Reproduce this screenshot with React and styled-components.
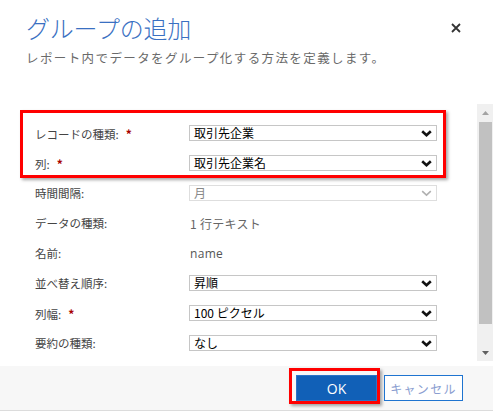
import React from "react";
import styled, { createGlobalStyle } from "styled-components";

const GlobalStyle = createGlobalStyle`
  html, body { margin: 0; padding: 0; background: #fff; }
  body {
    font-family: "Noto Sans CJK JP", "Noto Sans", sans-serif;
    overflow: hidden;
  }
  * { box-sizing: border-box; }
`;

const Dialog = styled.div`
  width: 493px;
  height: 411px;
  display: flex;
  flex-direction: column;
  background: #fff;
`;

const Header = styled.header`
  display: flex;
  justify-content: space-between;
  align-items: flex-start;
  padding: 12px 32px 0 26px;
`;

const Title = styled.h1`
  margin: 0;
  font-size: 24px;
  line-height: 32px;
  font-weight: 200;
  color: #3a70c2;
  letter-spacing: -0.2px;
`;

const Subtitle = styled.p`
  margin: 5px 0 0;
  font-size: 12.5px;
  line-height: 18px;
  color: #6a6a6a;
  letter-spacing: 1.4px;
`;

const CloseButton = styled.button`
  margin-top: 11px;
  padding: 0;
  border: 0;
  background: none;
  width: 10px;
  height: 10px;
  display: flex;
  cursor: pointer;
`;

const Body = styled.div`
  margin-top: 37px;
  height: 257px;
  display: flex;
`;

const Content = styled.div`
  flex: 1;
  padding: 6px 0 0 20px;
  overflow: hidden;
`;

const Group = styled.div`
  width: 426px;
  display: flex;
  flex-direction: column;
  gap: 6px;
  border: 3px solid ${(p) => (p.$highlight ? "#ff0000" : "transparent")};
  box-shadow: ${(p) => (p.$highlight ? "2px 2px 3px rgba(0,0,0,0.35)" : "none")};
  padding: ${(p) => (p.$highlight ? "8px 6px 0 12px" : "0 6px 0 12px")};
`;

const Row = styled.div`
  display: grid;
  grid-template-columns: 154px 248px;
  height: 24px;
  align-items: center;
`;

const Label = styled.span`
  font-size: 11.5px;
  color: #444;
  white-space: nowrap;
`;

const Required = styled.span`
  color: #a80000;
  font-weight: bold;
  margin-left: 7px;
  font-size: 12px;
`;

const SelectBox = styled.div`
  height: 16px;
  border: 1px solid ${(p) => (p.$disabled ? "#dedede" : "#c6c6c6")};
  background: #fff;
  display: flex;
  align-items: center;
  justify-content: space-between;
  padding: 0 4px 0 4px;
  font-size: 12px;
  line-height: 14px;
  color: ${(p) => (p.$disabled ? "#888" : "#000")};
`;

const Value = styled.span`
  font-size: 12px;
  color: ${(p) => (p.$latin ? "#555" : "#666")};
  font-family: ${(p) => (p.$latin ? '"Open Sans", "Noto Sans", sans-serif' : "inherit")};
  padding-left: 1px;
  letter-spacing: 0.3px;
`;

const Scrollbar = styled.div`
  width: 16px;
  background: #f0f0f0;
  display: flex;
  flex-direction: column;
`;

const Arrow = styled.div`
  height: 17px;
  display: flex;
  align-items: center;
  justify-content: center;
  padding-left: 1px;
`;

const Thumb = styled.div`
  height: 202px;
  margin: 1px 1px 0 2px;
  background: #c1c1c1;
`;

const Spacer = styled.div`
  flex: 1;
`;

const Footer = styled.footer`
  margin-top: 5px;
  height: 45px;
  background: #f7f7f7;
  border-bottom: 1px solid #dcdcdc;
  display: flex;
  justify-content: flex-end;
  align-items: flex-start;
  gap: 4px;
  padding: 2px 30px 0 0;
`;

const Highlight = styled.div`
  border: 3px solid #ff0000;
  padding: 4px 0 0 4px;
  box-shadow: 2px 2px 3px rgba(0, 0, 0, 0.35);
  display: flex;
`;

const Button = styled.button`
  height: 26px;
  width: ${(p) => (p.$primary ? "81px" : "79px")};
  margin-top: ${(p) => (p.$primary ? "0" : "7px")};
  border: 1px solid ${(p) => (p.$primary ? "#2b74c7" : "#1f74d0")};
  background: ${(p) => (p.$primary ? "#1160b7" : "#fff")};
  color: ${(p) => (p.$primary ? "#fff" : "#8a9dd0")};
  font-family: ${(p) =>
    p.$primary ? '"Open Sans", "Noto Sans", sans-serif' : '"Noto Sans CJK JP", sans-serif'};
  font-size: ${(p) => (p.$primary ? "14px" : "12px")};
  letter-spacing: ${(p) => (p.$primary ? "0" : "1.3px")};
  padding: 0;
  cursor: pointer;
`;

const Chevron = ({ disabled }) => (
  <svg width="11" height="7" viewBox="0 0 11 7">
    <polyline
      points="1.2,1.2 5.5,5.2 9.8,1.2"
      fill="none"
      stroke={disabled ? "#b0b0b0" : "#111"}
      strokeWidth={disabled ? 1.6 : 2.6}
    />
  </svg>
);

const Select = ({ value, disabled }) => (
  <SelectBox $disabled={disabled}>
    <span>{value}</span>
    <Chevron disabled={disabled} />
  </SelectBox>
);

const Field = ({ label, required, children }) => (
  <Row>
    <Label>
      {label}
      {required && <Required>*</Required>}
    </Label>
    {children}
  </Row>
);

export default function App() {
  return (
    <>
      <GlobalStyle />
      <Dialog>
        <Header>
          <div>
            <Title>グループの追加</Title>
            <Subtitle>レポート内でデータをグループ化する方法を定義します。</Subtitle>
          </div>
          <CloseButton aria-label="閉じる">
            <svg width="10" height="10" viewBox="0 0 10 10">
              <path d="M1 1 L9 9 M9 1 L1 9" stroke="#333" strokeWidth="1.8" />
            </svg>
          </CloseButton>
        </Header>
        <Body>
          <Content>
            <Group $highlight>
              <Field label="レコードの種類:" required>
                <Select value="取引先企業" />
              </Field>
              <Field label="列:" required>
                <Select value="取引先企業名" />
              </Field>
            </Group>
            <Group>
              <Field label="時間間隔:">
                <Select value="月" disabled />
              </Field>
              <Field label="データの種類:">
                <Value>1 行テキスト</Value>
              </Field>
              <Field label="名前:">
                <Value $latin>name</Value>
              </Field>
              <Field label="並べ替え順序:">
                <Select value="昇順" />
              </Field>
              <Field label="列幅:" required>
                <Select value="100 ピクセル" />
              </Field>
              <Field label="要約の種類:">
                <Select value="なし" />
              </Field>
            </Group>
          </Content>
          <Scrollbar>
            <Arrow>
              <svg width="7" height="4" viewBox="0 0 7 4">
                <polygon points="0,4 3.5,0 7,4" fill="#a3a3a3" />
              </svg>
            </Arrow>
            <Thumb />
            <Spacer />
            <Arrow>
              <svg width="7" height="4" viewBox="0 0 7 4">
                <polygon points="0,0 7,0 3.5,4" fill="#606060" />
              </svg>
            </Arrow>
          </Scrollbar>
        </Body>
        <Footer>
          <Highlight>
            <Button $primary>OK</Button>
          </Highlight>
          <Button>キャンセル</Button>
        </Footer>
      </Dialog>
    </>
  );
}
